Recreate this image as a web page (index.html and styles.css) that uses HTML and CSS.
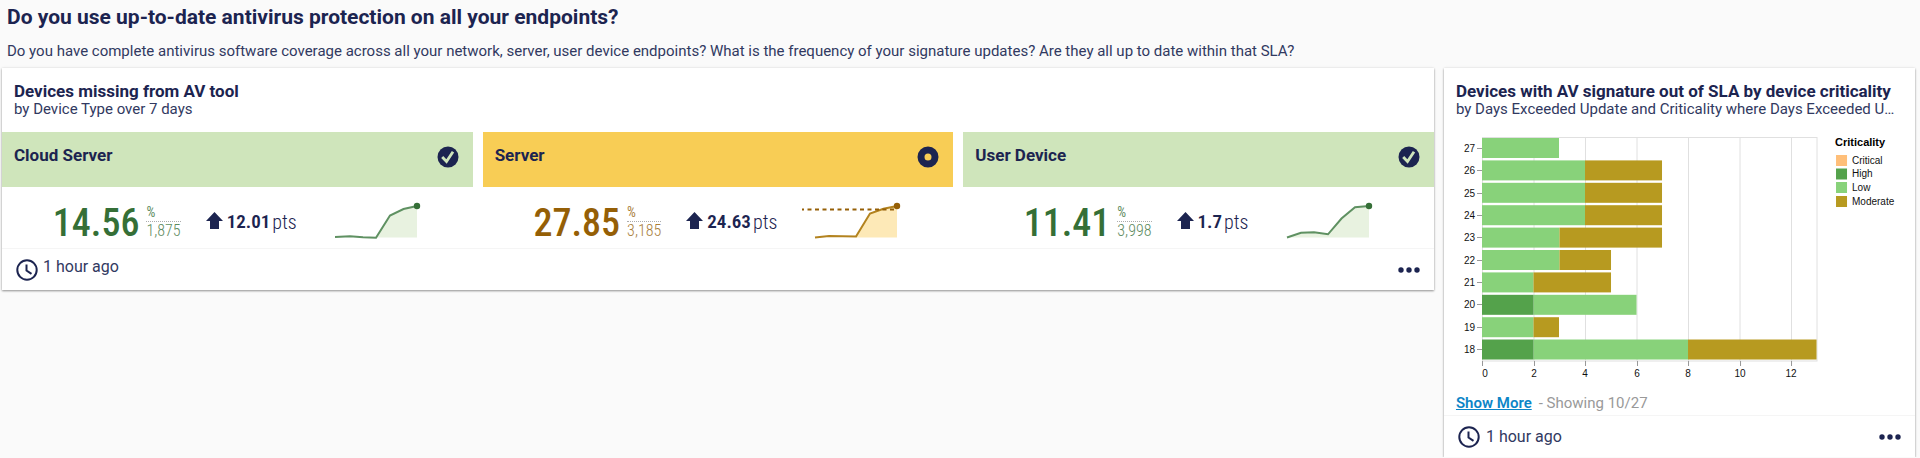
FILE: index.html
```
<!DOCTYPE html>
<html lang="en">
<head>
<meta charset="utf-8">
<title>Antivirus protection</title>
<link rel="stylesheet" href="styles.css">
</head>
<body>
<header class="intro">
  <h1 class="intro-title">Do you use up-to-date antivirus protection on all your endpoints?</h1>
  <p class="intro-text">Do you have complete antivirus software coverage across all your network, server, user device endpoints? What is the frequency of your signature updates? Are they all up to date within that SLA?</p>
</header>
<main class="board">
  <section class="card">
    <div class="card-head">
      <h2 class="card-title">Devices missing from AV tool</h2>
      <p class="card-sub">by Device Type over 7 days</p>
    </div>
    <div class="tiles">
      <article class="tile good">
        <div class="tile-head">
          <h3 class="tile-name">Cloud Server</h3>
          <svg class="status" viewBox="0 0 22 22" aria-hidden="true"><circle cx="11" cy="11" r="10.5" fill="#1c2450"/><path d="M5.200 11l4.300 4.500L16 5.800" fill="none" stroke="#cfe5bb" stroke-width="2.800"/></svg>
        </div>
        <div class="tile-body">
          <div class="metric"><strong class="value">14.56</strong><div class="detail"><span class="unit">%</span><span class="count">1,875</span></div></div>
          <div class="change"><svg class="arrow" viewBox="0 0 17 17" aria-hidden="true"><path d="M8.500 0L17 9h-4v8H4V9H0z" fill="#1c2450"/></svg><strong class="delta">12.01</strong><span class="pts">pts</span></div>
          <svg class="spark" viewBox="0 0 100 44" aria-hidden="true"><path d="M54 36.500L68 14.500 81.500 8 95 5V36.500z" fill="#e8f2e0"/><path d="M13 36l15-.8 13 1 13 .6L68 14.500 81.500 8 95 5" fill="none" stroke="#5f9162" stroke-width="2"/><circle cx="95" cy="5" r="3.200" fill="#356f37"/></svg>
        </div>
      </article>
      <article class="tile warn">
        <div class="tile-head">
          <h3 class="tile-name">Server</h3>
          <svg class="status" viewBox="0 0 22 22" aria-hidden="true"><circle cx="11" cy="11" r="7" fill="none" stroke="#1c2450" stroke-width="7"/></svg>
        </div>
        <div class="tile-body">
          <div class="metric"><strong class="value">27.85</strong><div class="detail"><span class="unit">%</span><span class="count">3,185</span></div></div>
          <div class="change"><svg class="arrow" viewBox="0 0 17 17" aria-hidden="true"><path d="M8.500 0L17 9h-4v8H4V9H0z" fill="#1c2450"/></svg><strong class="delta">24.63</strong><span class="pts">pts</span></div>
          <svg class="spark" viewBox="0 0 100 44" aria-hidden="true"><path d="M54 36.500L68 12.500 81.500 8 95 5V36.500z" fill="#fde9b7"/><path d="M13 36.500l14-1.500 27 .5L68 12.500 81.500 7.800 95 5" fill="none" stroke="#b3831f" stroke-width="2"/><path d="M0 8.500h95" fill="none" stroke="#955f06" stroke-width="2" stroke-dasharray="4 3.500" stroke-dashoffset="2"/><circle cx="95" cy="5" r="3.200" fill="#955f06"/></svg>
        </div>
      </article>
      <article class="tile good">
        <div class="tile-head">
          <h3 class="tile-name">User Device</h3>
          <svg class="status" viewBox="0 0 22 22" aria-hidden="true"><circle cx="11" cy="11" r="10.5" fill="#1c2450"/><path d="M5.200 11l4.300 4.500L16 5.800" fill="none" stroke="#cfe5bb" stroke-width="2.800"/></svg>
        </div>
        <div class="tile-body">
          <div class="metric"><strong class="value">11.41</strong><div class="detail"><span class="unit">%</span><span class="count">3,998</span></div></div>
          <div class="change"><svg class="arrow" viewBox="0 0 17 17" aria-hidden="true"><path d="M8.500 0L17 9h-4v8H4V9H0z" fill="#1c2450"/></svg><strong class="delta">1.7</strong><span class="pts">pts</span></div>
          <svg class="spark" viewBox="0 0 100 44" aria-hidden="true"><path d="M13 36.500l14-4.500 13-.7 14 2L67.500 17 81 6.200 95 5v31.500z" fill="#e8f2e0"/><path d="M13 36.500l14-4.700 13-.5 14 2L67.500 17.500 81 6.200 95 5" fill="none" stroke="#5f9162" stroke-width="2"/><circle cx="95" cy="5" r="3.200" fill="#356f37"/></svg>
        </div>
      </article>
    </div>
    <footer class="card-foot">
      <svg class="clock" viewBox="0 0 22 22" aria-hidden="true"><circle cx="11" cy="11" r="9.700"/><path d="M10.500 5.500v6l5 3.300"/></svg>
      <span class="age raised">1 hour ago</span>
      <button class="more" type="button" aria-label="More options"><svg class="dots" viewBox="0 0 22 6" aria-hidden="true"><circle cx="3" cy="3" r="2.700"/><circle cx="11" cy="3" r="2.700"/><circle cx="19" cy="3" r="2.700"/></svg></button>
    </footer>
  </section>

  <section class="card">
    <div class="card-head">
      <h2 class="card-title">Devices with AV signature out of SLA by device criticality</h2>
      <p class="card-sub">by Days Exceeded Update and Criticality where Days Exceeded U…</p>
    </div>
    <div class="chart-wrap">
      <svg class="chart" viewBox="0 0 447 258" role="img" aria-label="Devices by days exceeded and criticality">
        <path class="grid" d="M78 5.500V229M129.500 5.500V229M181 5.500V229M232.500 5.500V229M284 5.500V229M335.500 5.500V229M26.500 5.500H361V229H26.500z"/>
        <g class="low">
          <rect x="26" y="6" width="77" height="20"/>
          <rect x="26" y="28.400" width="103" height="20"/>
          <rect x="26" y="50.800" width="103" height="20"/>
          <rect x="26" y="73.200" width="103" height="20"/>
          <rect x="26" y="95.600" width="77.500" height="20"/>
          <rect x="26" y="118" width="77.500" height="20"/>
          <rect x="26" y="140.400" width="51.500" height="20"/>
          <rect x="77.500" y="162.800" width="103" height="20"/>
          <rect x="26" y="185.200" width="51.500" height="20"/>
          <rect x="77.500" y="207.500" width="154.500" height="20"/>
        </g>
        <g class="moderate">
          <rect x="129" y="28.400" width="77" height="20"/>
          <rect x="129" y="50.800" width="77" height="20"/>
          <rect x="129" y="73.200" width="77" height="20"/>
          <rect x="103.500" y="95.600" width="102.500" height="20"/>
          <rect x="103.500" y="118" width="51.500" height="20"/>
          <rect x="77.500" y="140.400" width="77.500" height="20"/>
          <rect x="77.500" y="185.200" width="25.500" height="20"/>
          <rect x="232" y="207.500" width="128.500" height="20"/>
        </g>
        <g class="high">
          <rect x="26" y="162.800" width="51.500" height="20"/>
          <rect x="26" y="207.500" width="51.500" height="20"/>
        </g>
        <path class="tick" d="M21 16.500h5M21 38.500h5M21 61.500h5M21 83.500h5M21 105.500h5M21 128.500h5M21 150.500h5M21 172.500h5M21 195.500h5M21 217.500h5M26.500 229v5M78.500 229v5M129.500 229v5M181.500 229v5M232.500 229v5M284.500 229v5M335.500 229v5"/>
        <g class="label end">
          <text x="19" y="20">27</text><text x="19" y="42">26</text><text x="19" y="65">25</text><text x="19" y="87">24</text><text x="19" y="109">23</text><text x="19" y="132">22</text><text x="19" y="154">21</text><text x="19" y="176">20</text><text x="19" y="199">19</text><text x="19" y="221">18</text>
        </g>
        <g class="label middle">
          <text x="29" y="245">0</text><text x="78" y="245">2</text><text x="129" y="245">4</text><text x="181" y="245">6</text><text x="232" y="245">8</text><text x="284" y="245">10</text><text x="335" y="245">12</text>
        </g>
        <text class="legend-title" x="379" y="14">Criticality</text>
        <rect class="critical" x="380" y="23" width="11" height="11"/>
        <rect class="high" x="380" y="36.500" width="11" height="11"/>
        <rect class="low" x="380" y="50" width="11" height="11"/>
        <rect class="moderate" x="380" y="64" width="11" height="11"/>
        <g class="label">
          <text x="396" y="32">Critical</text><text x="396" y="45">High</text><text x="396" y="59">Low</text><text x="396" y="73">Moderate</text>
        </g>
      </svg>
    </div>
    <p class="paging"><a class="show-more" href="#all">Show More</a><span class="showing">- Showing 10/27</span></p>
    <footer class="card-foot">
      <svg class="clock" viewBox="0 0 22 22" aria-hidden="true"><circle cx="11" cy="11" r="9.700"/><path d="M10.500 5.500v6l5 3.300"/></svg>
      <span class="age">1 hour ago</span>
      <button class="more" type="button" aria-label="More options"><svg class="dots" viewBox="0 0 22 6" aria-hidden="true"><circle cx="3" cy="3" r="2.700"/><circle cx="11" cy="3" r="2.700"/><circle cx="19" cy="3" r="2.700"/></svg></button>
    </footer>
  </section>
</main>
</body>
</html>
```
FILE: styles.css
```
* { box-sizing: border-box; }
body { margin: 0; background: #fafafa; color: #1c2450; font-family: Roboto, "Liberation Sans", sans-serif; font-size: 16px; }
h1, h2, h3, p { margin: 0; }
.intro { padding: 3px 7px 6px; }
.intro-title { font-size: 21px; line-height: 28px; font-weight: 700; }
.intro-text { margin-top: 10px; font-size: 15px; line-height: 20px; color: #313961; }
.board { display: grid; grid-template-columns: minmax(0, 76fr) minmax(0, 25fr); gap: 10px; align-items: start; padding: 1px 5px 0 2px; }
.card { background: #fff; box-shadow: 0 1px 2px rgba(0, 0, 0, 0.4), 0 0 3px rgba(0, 0, 0, 0.08); }
.card-head { padding: 14px 12px; }
.card-title { font-size: 17px; line-height: 18px; font-weight: 700; white-space: nowrap; }
.card-sub { font-size: 15px; line-height: 18px; color: #313961; overflow: hidden; white-space: nowrap; text-overflow: ellipsis; }
.tiles { display: grid; grid-template-columns: repeat(3, minmax(0, 1fr)); gap: 10px; }
.tile-head { display: flex; justify-content: space-between; height: 55px; padding: 14px; padding-left: 12px; }
.tile-name { font-size: 17px; line-height: 18px; font-weight: 700; }
.status { width: 22px; height: 22px; }
.good .tile-head { background: #cfe5bb; }
.warn .tile-head { background: #f8cd55; }
.tile-body { display: flex; align-items: center; justify-content: center; gap: 25px; height: 61px; font-family: "Roboto Condensed", Roboto, sans-serif; }
.good .metric { color: #356f37; }
.warn .metric { color: #955f06; }
.metric { display: flex; align-items: center; gap: 7px; }
.value { font-size: 38px; line-height: 44px; font-weight: 500; padding-top: 10px; }
.detail { display: flex; flex-direction: column; padding-top: 8px; opacity: 0.8; }
.unit { font-size: 14px; line-height: 17px; border-bottom: 1px dotted #999; }
.count { font-size: 16px; line-height: 18px; font-weight: 300; }
.change { display: flex; align-items: center; padding-top: 9px; }
.arrow { width: 17px; height: 17px; margin: 0 4px 3px 0; }
.delta { font-size: 19px; line-height: 24px; font-weight: 600; }
.pts { margin-left: 2px; font-size: 20px; line-height: 24px; font-weight: 300; }
.spark { width: 100px; height: 44px; margin-top: 10px; }
.card-foot { display: flex; align-items: center; height: 42px; padding: 0 14px; border-top: 1px solid #f5f5f5; }
.clock { width: 22px; height: 22px; fill: none; stroke: #1c2450; stroke-width: 2; }
.age { margin-left: 6px; font-size: 16px; line-height: 20px; color: #313961; }
.raised { margin-left: 5px; padding-bottom: 6px; }
.more { display: flex; margin-left: auto; padding: 0; border: 0; background: none; }
.dots { width: 22px; height: 6px; fill: #1c2450; }
.chart-wrap { padding: 0 12px; }
.chart { display: block; width: 100%; font-family: "Liberation Sans", Arial, sans-serif; }
.grid { fill: none; stroke: #e0e0e0; stroke-width: 1; }
.tick { fill: none; stroke: #999; stroke-width: 1; }
.label { font-size: 10px; fill: #111; }
.end { text-anchor: end; }
.middle { text-anchor: middle; }
.legend-title { font-size: 11px; font-weight: 700; fill: #000; }
.low { fill: #88d27a; }
.moderate { fill: #b79a20; }
.high { fill: #54a24b; }
.critical { fill: #ffbf79; }
.paging { padding: 4px 12px 2px; font-size: 15px; line-height: 19px; }
.show-more { color: #0c85c7; font-weight: 600; }
.showing { margin-left: 7px; color: #999; }
```
